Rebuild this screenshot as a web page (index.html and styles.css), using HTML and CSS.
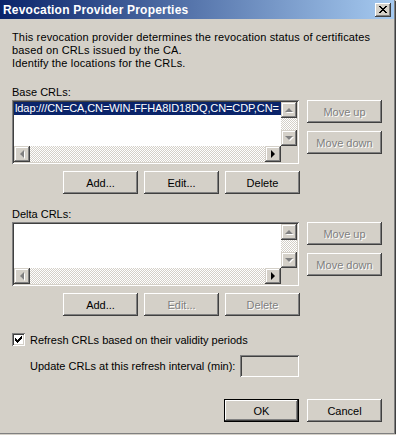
FILE: index.html
```html
<!DOCTYPE html>
<html lang="en">
<head>
  <meta charset="UTF-8">
  <title>Revocation Provider Properties</title>
  <link rel="stylesheet" href="styles.css">
</head>
<body>

<div class="window">
  <div class="titlebar">
    <span class="title">Revocation Provider Properties</span>
    <span class="close-btn">
      <svg width="8" height="7" viewBox="0 0 8 7"><path d="M0 0h2v1h-2zM6 0h2v1h-2zM1 1h2v1h-2zM5 1h2v1h-2zM2 2h4v1h-4zM3 3h2v1h-2zM2 4h4v1h-4zM1 5h2v1h-2zM5 5h2v1h-2zM0 6h2v1h-2zM6 6h2v1h-2z" fill="#000"/></svg>
    </span>
  </div>

  <div class="content">
    <p class="intro">This revocation provider determines the revocation status of certificates<br>based on CRLs issued by the CA.<br>Identify the locations for the CRLs.</p>

    <!-- Base CRLs -->
    <div class="label">Base CRLs:</div>
    <div class="list-row">
      <div class="listbox">
        <div class="items">
          <div class="item selected">ldap:///CN=CA,CN=WIN-FFHA8ID18DQ,CN=CDP,CN=</div>
        </div>
        <div class="vscroll">
          <span class="sb-btn"><i class="arrow up off"></i></span>
          <span class="track"></span>
          <span class="sb-btn"><i class="arrow down off"></i></span>
        </div>
        <div class="hscroll">
          <span class="sb-btn"><i class="arrow left off"></i></span>
          <span class="track"></span>
          <span class="sb-btn"><i class="arrow right"></i></span>
        </div>
        <div class="corner"></div>
      </div>
      <div class="side-buttons">
        <button class="btn" disabled>Move up</button>
        <button class="btn" disabled>Move down</button>
      </div>
    </div>
    <div class="button-row">
      <button class="btn">Add...</button>
      <button class="btn">Edit...</button>
      <button class="btn">Delete</button>
    </div>

    <!-- Delta CRLs -->
    <div class="label delta">Delta CRLs:</div>
    <div class="list-row">
      <div class="listbox">
        <div class="items"></div>
        <div class="vscroll">
          <span class="sb-btn"><i class="arrow up off"></i></span>
          <span class="track"></span>
          <span class="sb-btn"><i class="arrow down off"></i></span>
        </div>
        <div class="hscroll">
          <span class="sb-btn"><i class="arrow left off"></i></span>
          <span class="track"></span>
          <span class="sb-btn"><i class="arrow right"></i></span>
        </div>
        <div class="corner"></div>
      </div>
      <div class="side-buttons">
        <button class="btn" disabled>Move up</button>
        <button class="btn" disabled>Move down</button>
      </div>
    </div>
    <div class="button-row">
      <button class="btn">Add...</button>
      <button class="btn" disabled>Edit...</button>
      <button class="btn" disabled>Delete</button>
    </div>

    <label class="check-row">
      <span class="checkbox">
        <svg width="7" height="7" viewBox="0 0 7 7"><path d="M6 0h1v3h-1zM5 1h1v3h-1zM4 2h1v3h-1zM3 3h1v3h-1zM2 4h1v3h-1zM1 3h1v3h-1zM0 2h1v3h-1z" fill="#000"/></svg>
      </span>
      Refresh CRLs based on their validity periods
    </label>

    <div class="interval-row">
      <span>Update CRLs at this refresh interval (min):</span>
      <span class="textbox"></span>
    </div>

    <div class="footer">
      <button class="btn default">OK</button>
      <button class="btn">Cancel</button>
    </div>
  </div>
</div>

</body>
</html>
```

FILE: styles.css
```css
* {
  box-sizing: border-box;
}

body {
  margin: 0;
  background: #d4d0c8;
  color: #000;
  font-family: Tahoma, "Liberation Sans", sans-serif;
  font-size: 11px;
}

.window {
  width: 395px;
  height: 434px;
  background: #d4d0c8;
  border-right: 1px solid #808080;
  border-bottom: 1px solid #808080;
  box-shadow: 1px 1px 0 #404040;
}

/* barra de titulo */
.titlebar {
  height: 19px;
  display: flex;
  align-items: center;
  justify-content: space-between;
  padding: 0 3px 0 3px;
  background: linear-gradient(to right, #0a246a, #a6caf0);
}

.title {
  color: #fff;
  font-weight: bold;
  font-size: 12px;
  letter-spacing: 0.2px;
}

.close-btn {
  width: 16px;
  height: 14px;
  display: flex;
  align-items: center;
  justify-content: center;
  background: #d4d0c8;
  box-shadow: inset -1px -1px #404040, inset 1px 1px #fff, inset -2px -2px #808080;
}

.close-btn svg {
  display: block;
  margin-top: -1px;
}

.content {
  padding: 0 12px;
}

.intro {
  margin: 12px 0 0;
  line-height: 13px;
  letter-spacing: 0.15px;
}

.label {
  margin-top: 16px;
  height: 13px;
  line-height: 13px;
  margin-bottom: 1px;
}

.label.delta {
  margin-top: 14px;
}

.list-row {
  display: flex;
  gap: 8px;
}

/* lista hundida */
.listbox {
  width: 287px;
  height: 64px;
  padding: 2px;
  background: #fff;
  box-shadow: inset 1px 1px #808080, inset -1px -1px #fff, inset 2px 2px #404040, inset -2px -2px #d4d0c8;
  display: grid;
  grid-template-columns: 1fr 16px;
  grid-template-rows: 1fr 16px;
}

.items {
  overflow: hidden;
}

.item {
  height: 13px;
  line-height: 13px;
  padding-left: 1px;
  white-space: nowrap;
  overflow: hidden;
  letter-spacing: -0.1px;
}

.item.selected {
  background: #0a246a;
  color: #fff;
}

.vscroll {
  display: flex;
  flex-direction: column;
}

.hscroll {
  display: flex;
}

.track {
  flex: 1;
  background-color: #fff;
  background-image: repeating-conic-gradient(#d4d0c8 0 25%, #fff 0 50%);
  background-size: 2px 2px;
}

.sb-btn,
.corner {
  width: 16px;
  height: 16px;
  background: #d4d0c8;
}

.sb-btn {
  display: flex;
  align-items: center;
  justify-content: center;
  box-shadow: inset -1px -1px #404040, inset 1px 1px #d4d0c8, inset -2px -2px #808080, inset 2px 2px #fff;
}

.arrow {
  width: 0;
  height: 0;
  border: 4px solid transparent;
}

.arrow.up {
  border-bottom-color: #000;
  border-top-width: 0;
  margin-top: -1px;
}

.arrow.down {
  border-top-color: #000;
  border-bottom-width: 0;
}

.arrow.left {
  border-right-color: #000;
  border-left-width: 0;
  margin-left: -1px;
}

.arrow.right {
  border-left-color: #000;
  border-right-width: 0;
}

.arrow.off {
  filter: drop-shadow(1px 1px 0 #fff);
}

.arrow.up.off { border-bottom-color: #808080; }
.arrow.down.off { border-top-color: #808080; }
.arrow.left.off { border-right-color: #808080; }

.side-buttons {
  display: flex;
  flex-direction: column;
  gap: 8px;
}

/* botones */
.btn {
  width: 75px;
  height: 23px;
  padding: 0;
  border: none;
  background: #d4d0c8;
  color: #000;
  font: inherit;
  box-shadow: inset -1px -1px #404040, inset 1px 1px #fff, inset -2px -2px #808080, inset 2px 2px #d4d0c8;
}

.btn:disabled {
  color: #808080;
  text-shadow: 1px 1px 0 #fff;
}

.btn.default {
  box-shadow: inset 0 0 0 1px #000, inset -2px -2px #404040, inset 2px 2px #fff, inset -3px -3px #808080;
}

.button-row {
  display: flex;
  gap: 6px;
  margin: 7px 0 0 51px;
}

.check-row {
  display: flex;
  align-items: center;
  gap: 5px;
  height: 13px;
  margin-top: 17px;
}

.checkbox {
  width: 13px;
  height: 13px;
  display: flex;
  align-items: center;
  justify-content: center;
  background: #fff;
  box-shadow: inset 1px 1px #808080, inset -1px -1px #fff, inset 2px 2px #404040, inset -2px -2px #d4d0c8;
}

.interval-row {
  width: 287px;
  height: 22px;
  margin-top: 9px;
  padding-left: 18px;
  display: flex;
  align-items: center;
  justify-content: space-between;
}

.textbox {
  width: 59px;
  height: 22px;
  background: #d4d0c8;
  box-shadow: inset 1px 1px #808080, inset -1px -1px #fff, inset 2px 2px #404040, inset -2px -2px #d4d0c8;
}

.footer {
  display: flex;
  justify-content: flex-end;
  gap: 8px;
  margin-top: 22px;
}
```
